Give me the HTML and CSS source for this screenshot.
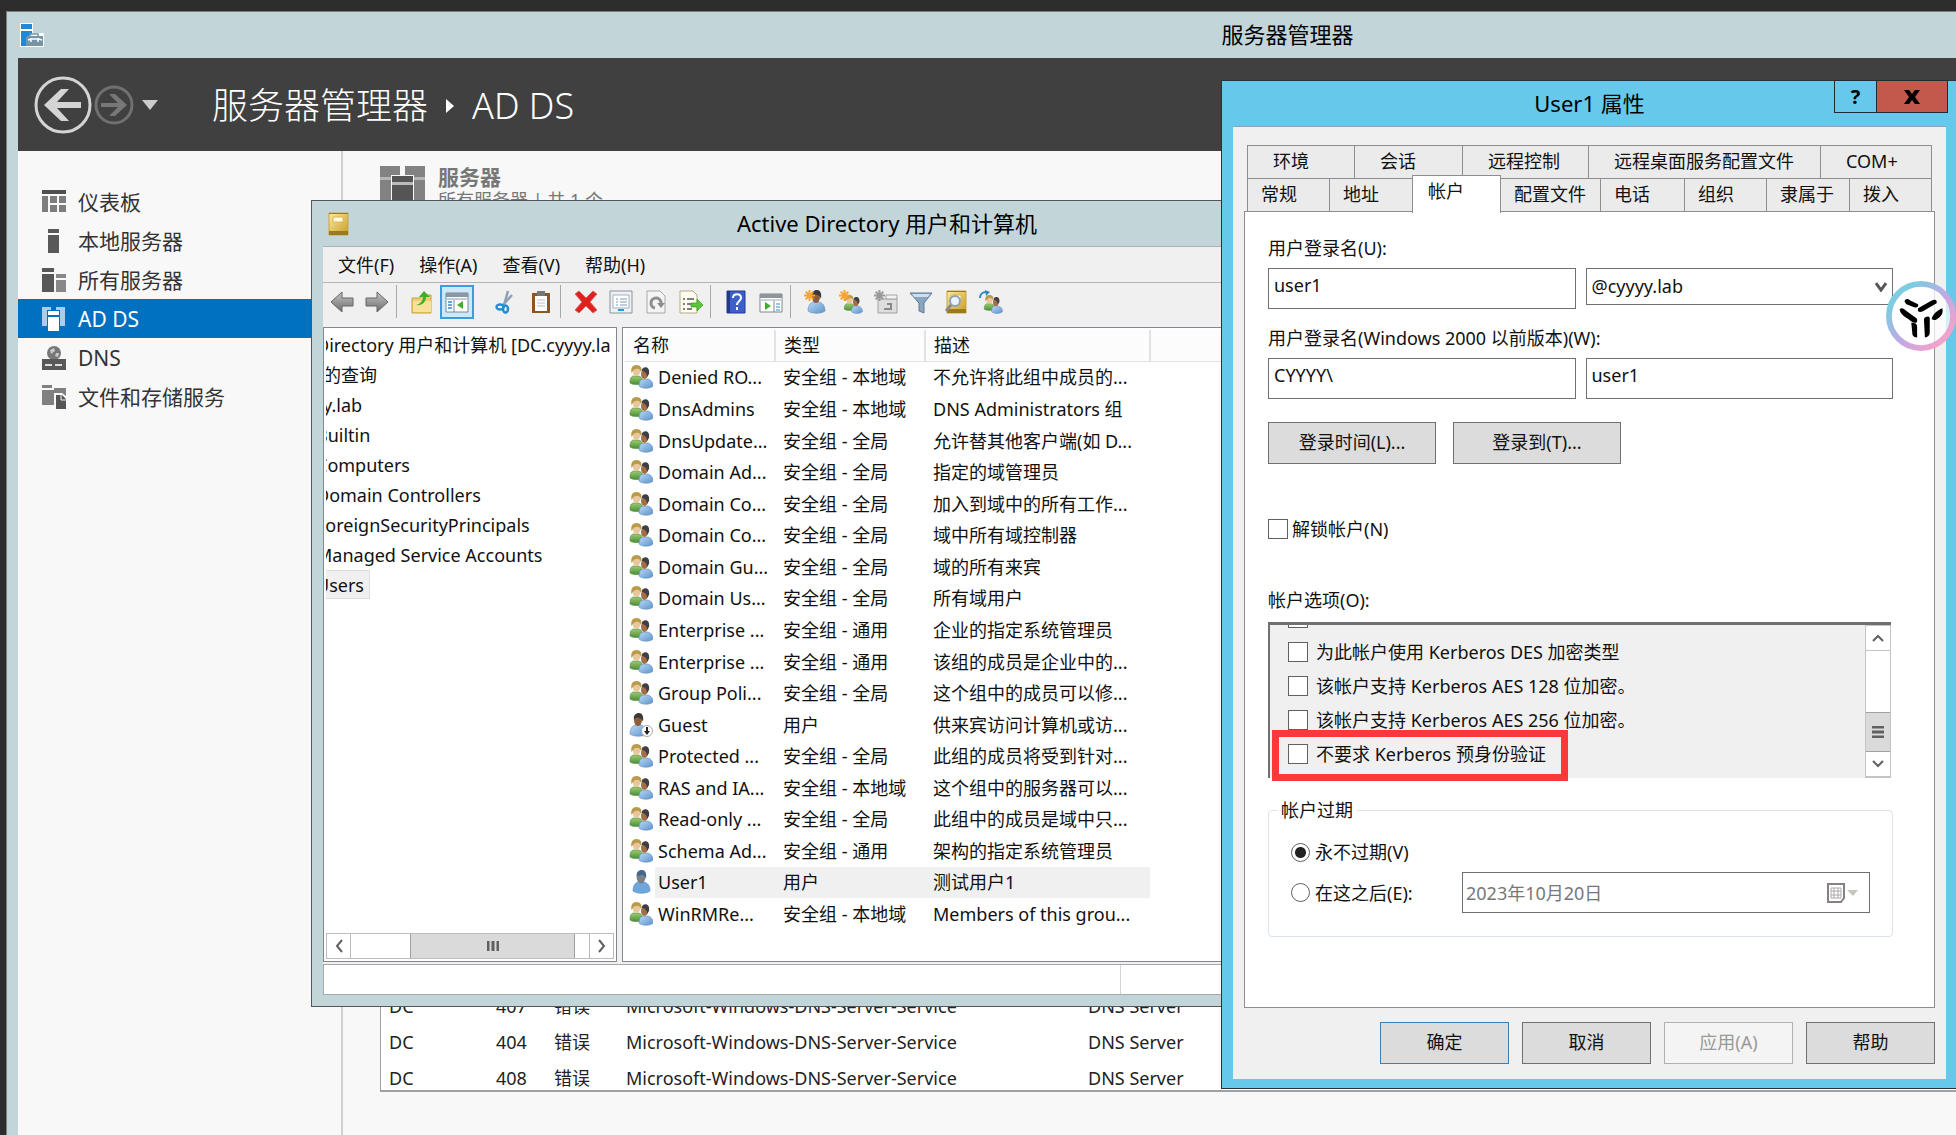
FILE: index.html
```html
<!DOCTYPE html>
<html lang="zh-CN">
<head>
<meta charset="utf-8">
<title>服务器管理器</title>
<link rel="stylesheet" href="styles.css">
</head>
<body>
<svg class="defs" aria-hidden="true">
  <defs>
    <linearGradient id="gGreen" x1="0" y1="0" x2="0" y2="1"><stop offset="0" stop-color="#9ccb74"/><stop offset="1" stop-color="#4d8f35"/></linearGradient>
    <linearGradient id="gBlue" x1="0" y1="0" x2="1" y2="1"><stop offset="0" stop-color="#b9d8f4"/><stop offset="1" stop-color="#5b93cd"/></linearGradient>
    <linearGradient id="gGold" x1="0" y1="0" x2="1" y2="1"><stop offset="0" stop-color="#fbeaa0"/><stop offset="1" stop-color="#c79c28"/></linearGradient>
    <linearGradient id="gGrey" x1="0" y1="0" x2="0" y2="1"><stop offset="0" stop-color="#c4c4c4"/><stop offset="1" stop-color="#6d6d6d"/></linearGradient>
    <linearGradient id="gRing" x1="0" y1="0" x2="1" y2="1"><stop offset="0.2" stop-color="#7fcbe0"/><stop offset="0.55" stop-color="#c3a8e4"/><stop offset="0.85" stop-color="#f3a2cb"/></linearGradient>
    <symbol id="group" viewBox="0 0 24 24">
      <path d="M1 18c0-5 1-6 3-7h6c3 1 4 4 4 7-3 2-10 2-13 0z" fill="url(#gGreen)" stroke="#4e8a3a" stroke-width=".6"/>
      <ellipse cx="7.500" cy="6" rx="3.800" ry="5" fill="#e8c79c"/>
      <path d="M2.500 8c-1-5 1-8 5-8s6 3 4.500 7c-1-3-3-4-5-3-2 0-3 2-4.500 4z" fill="#b99a4a"/>
      <path d="M10 21c0-4 1-6 4-7h5c3 1 5 3 5 7-3 3-11 3-14 0z" fill="url(#gBlue)" stroke="#5e8cc0" stroke-width=".6"/>
      <ellipse cx="15.500" cy="9" rx="3.500" ry="5" fill="#a56f45"/>
      <path d="M14 3c4-2 7 1 6 6l-2 3c0-4-2-5-4-6-2 0-1-2 0-3z" fill="#3f3f45"/>
    </symbol>
    <symbol id="user" viewBox="0 0 24 24">
      <path d="M4 21c0-5 2-8 5-9h6c4 1 6 4 6 9-4 3-13 3-17 0z" fill="url(#gBlue)" stroke="#5e8cc0" stroke-width=".6"/>
      <ellipse cx="12" cy="7" rx="4" ry="6" fill="#8f5c38"/>
      <path d="M8 7c-1-5 2-7 5-7s5 3 4 9c-1-3-2-4-4-4-2-1-4 0-5 2z" fill="#38383d"/>
    </symbol>
    <symbol id="burst" viewBox="0 0 10 10">
      <path d="M5 0v10M0 5h10M1.500 1.500l7 7M8.500 1.500l-7 7" stroke="currentColor" stroke-width="1.800"/>
    </symbol>
    <symbol id="book" viewBox="0 0 24 24">
      <path d="M3 1h19v22H3z" fill="url(#gGold)" stroke="#c9a53a"/>
      <path d="M3 1h19v1H3zM3 19h19v4H3z" fill="#9b7a1c"/>
      <path d="M7 5h10v5H7z" fill="#fffbe6" stroke="#d8b84a"/>
    </symbol>
  </defs>
</svg>

<main class="manager">
  <header class="titlebar">
    <svg class="app-icon" viewBox="0 0 24 24"><path d="M0 0h13v10h11v14H0z" fill="#fff"/><path d="M1 1h11v5H1zM1 8h11v3l-5 3v9H1z" fill="#1e88dc"/><path d="M7 13h16v10H6V15z" fill="#7694a6"/><path d="M8 17l3-1h8l3 1M11 15v4M18 15v4" fill="none" stroke="#fff" stroke-width="1.500"/><path d="M10 13v-2h8v2" fill="none" stroke="#7694a6" stroke-width="1.500"/></svg>
    <h1 class="caption">服务器管理器</h1>
  </header>
  <nav class="ribbon" aria-label="导航">
    <button class="nav-btn" aria-label="后退"><svg width="58" height="58" viewBox="0 0 58 58"><circle cx="29" cy="29" r="27" fill="none" stroke="#d4d4d4" stroke-width="3"/><path d="M10 29l17-16h8L23 26h24v6H23l12 13h-8z" fill="#d4d4d4"/></svg></button>
    <button class="nav-btn" aria-label="前进"><svg width="40" height="40" viewBox="0 0 40 40"><circle cx="20" cy="20" r="18" fill="none" stroke="#707070" stroke-width="3"/><path d="M33 20L21 9h-6l9 9H7v4h17l-9 9h6z" fill="#777"/></svg></button>
    <button class="nav-btn nav-more" aria-label="历史记录"><svg width="16" height="10" viewBox="0 0 16 10"><path d="M0 0h16L8 10z" fill="#ccc"/></svg></button>
    <p class="crumbs"><span>服务器管理器</span><svg width="8" height="14" viewBox="0 0 8 14"><path d="M0 0l8 7-8 7z" fill="#fff"/></svg><span>AD DS</span></p>
  </nav>
  <div class="workspace">
    <nav class="sidebar" aria-label="服务器管理器">
      <a href="#"><svg class="side-icon" viewBox="0 0 24 24"><path d="M0 0h24v4H0z" fill="#4f4f4f"/><path d="M0 6h6v16H0zM8 6h7v7H8zM17 6h7v7h-7zM8 15h7v7H8zM17 15h7v7h-7z" fill="#7d7d7d"/></svg>仪表板</a>
      <a href="#"><svg class="side-icon" viewBox="0 0 24 24"><path d="M6 0h11v4H6zM6 6h11v18H6z" fill="#585858"/></svg>本地服务器</a>
      <a href="#"><svg class="side-icon" viewBox="0 0 24 24"><path d="M0 0h12v4H0zM0 6h12v18H0z" fill="#585858"/><path d="M14 6h10v4H14zM14 12h10v12H14z" fill="#888"/></svg>所有服务器</a>
      <a href="#" class="current"><svg class="side-icon" viewBox="0 0 24 24"><path d="M0 0h9v3H5v16H0zM14 0h9v19h-5V3h-4z" fill="#a9cdea"/><path d="M6 4h11v4H6zM6 10h11v14H6z" fill="#fff"/></svg>AD DS</a>
      <a href="#"><svg class="side-icon" viewBox="0 0 24 24"><circle cx="12" cy="7" r="7" fill="#777"/><path d="M8 4l4-2 1 3-4 3zM14 7l3 0-1 4-3-1z" fill="#c9c9c9"/><path d="M0 13h24v11H0z" fill="#585858"/><path d="M3 18h7v2H3zM13 18h7v2h-7z" fill="#ddd"/></svg>DNS</a>
      <a href="#"><svg class="side-icon" viewBox="0 0 24 24"><path d="M0 0h10v3H0zM0 5h12V3h12v8l-4-3h-8v12H0z" fill="#808080"/><path d="M14 10h6l4 4v10H14z" fill="#555"/><path d="M19 10v5h5" fill="none" stroke="#f8f8f8"/></svg>文件和存储服务</a>
    </nav>
    <section class="content">
      <header class="tile-head">
        <svg width="45" height="45" viewBox="0 0 45 45"><path d="M0 0h20v9h-9v36H0zM25 0h20v45H34V9h-9z" fill="#828282"/><path d="M0 11h11v3H0zM34 11h11v3H34z" fill="#b5b5b5"/><path d="M12 10h21v6H12zM12 19h21v26H12z" fill="#555"/><path d="M12 16h21v3H12z" fill="#bbb"/></svg>
        <div><h2>服务器</h2><p>所有服务器 | 共 1 个</p></div>
      </header>
      <div class="events">
        <table>
          <colgroup><col class="c-host"><col class="c-id"><col class="c-level"><col class="c-source"><col></colgroup>
          <tbody>
            <tr><td>DC</td><td>407</td><td>错误</td><td>Microsoft-Windows-DNS-Server-Service</td><td>DNS Server</td></tr>
            <tr><td>DC</td><td>404</td><td>错误</td><td>Microsoft-Windows-DNS-Server-Service</td><td>DNS Server</td></tr>
            <tr><td>DC</td><td>408</td><td>错误</td><td>Microsoft-Windows-DNS-Server-Service</td><td>DNS Server</td></tr>
          </tbody>
        </table>
      </div>
    </section>
  </div>
</main>

<section class="aduc" aria-label="Active Directory 用户和计算机">
  <header class="titlebar">
    <svg class="app-icon" viewBox="0 0 24 24"><use href="#book"/></svg>
    <h2 class="caption">Active Directory 用户和计算机</h2>
  </header>
  <div class="console">
    <nav class="menu" aria-label="菜单"><button>文件(F)</button><button>操作(A)</button><button>查看(V)</button><button>帮助(H)</button></nav>
    <div class="toolbar">
      <button aria-label="后退"><svg viewBox="0 0 24 24"><path d="M1 12L12 2v6h11v8H12v6z" fill="url(#gGrey)" stroke="#666"/></svg></button>
      <button aria-label="前进"><svg viewBox="0 0 24 24"><path d="M23 12L12 2v6H1v8h11v6z" fill="url(#gGrey)" stroke="#666"/></svg></button>
      <i class="sep"></i>
      <button aria-label="上一级"><svg viewBox="0 0 24 24"><path d="M2 8h8l2-3h9v18H2z" fill="#f0cf72" stroke="#c9a13b"/><path d="M3 11h18v11H3z" fill="#f9e19a"/><path d="M6 15c5-1 7-5 7-8H9l5-6 6 6h-4c0 5-4 9-10 8z" fill="#3fae2a"/></svg></button>
      <button class="on" aria-label="显示控制台树"><svg viewBox="0 0 24 24"><path d="M1 3h22v19H1z" fill="#fff" stroke="#7b8794"/><path d="M1 3h22v4H1z" fill="#8b97a5"/><path d="M1 8h22v2H1z" fill="#c4ccd5"/><path d="M3 12h4M3 15h4M3 18h4" stroke="#3b88c9" stroke-width="1.500"/><path d="M9 10v12" stroke="#7b8794"/><path d="M18 11v8l-6-4z" fill="#3fae2a"/></svg></button>
      <button class="apart" aria-label="剪切"><svg viewBox="0 0 24 24"><path d="M14 1l-4 14M18 5L8 16" stroke="#8fa0b3" stroke-width="2.500"/><ellipse cx="6" cy="17" rx="3.500" ry="2.500" fill="none" stroke="#1f8fd4" stroke-width="2.500"/><ellipse cx="11.500" cy="19" rx="2.500" ry="3.500" fill="none" stroke="#1f8fd4" stroke-width="2.500"/></svg></button>
      <button aria-label="复制"><svg viewBox="0 0 24 24"><path d="M3 3h18v20H3z" fill="#8b5524"/><path d="M6 6h12v15H6z" fill="#fff"/><path d="M8 1h8v5H8z" fill="#777"/><path d="M8 10h8M8 13h8M8 16h8" stroke="#b9bec4"/></svg></button>
      <i class="sep"></i>
      <button aria-label="删除"><svg viewBox="0 0 24 24"><path d="M1 4l4-3 7 7 7-7 4 3-7 8 7 8-4 3-7-7-7 7-4-3 7-8z" fill="#e0201f" stroke="#d86a66"/></svg></button>
      <button aria-label="属性"><svg viewBox="0 0 24 24"><path d="M1 1h22v22H1z" fill="#eef1f4" stroke="#8b929a"/><path d="M4 5h16v13H4z" fill="#fff" stroke="#9fb0c2"/><path d="M7 9h2M7 12h2M7 15h2M11 9h7M11 12h7M11 15h7" stroke="#7d9ab8"/><path d="M9 20h6" stroke="#1f9ddb" stroke-width="2"/></svg></button>
      <button aria-label="刷新"><svg viewBox="0 0 24 24"><path d="M3 1h13l5 5v17H3z" fill="#f4f4f4" stroke="#a7a7a7"/><path d="M11 18a5 5 0 1 1 6-5" fill="none" stroke="#8d8d8d" stroke-width="3"/><path d="M13 13h8l-4 5z" fill="#8d8d8d"/></svg></button>
      <button aria-label="导出列表"><svg viewBox="0 0 24 24"><path d="M1 1h13l4 4v18H1z" fill="#fffdf0" stroke="#b3ab86"/><path d="M4 9h2M8 9h7M4 14h2M8 14h5M4 19h2M8 19h5" stroke="#555" stroke-width="1.500"/><path d="M12 13h6V9l6 6-6 6v-4h-6z" fill="#5ec43a" stroke="#3a9a22" stroke-width=".7"/></svg></button>
      <i class="sep"></i>
      <button aria-label="帮助"><svg viewBox="0 0 24 24"><path d="M3 1h18v22H3z" fill="#3c5fc9" stroke="#22388f"/><path d="M3 1h3v22H3z" fill="#22388f"/><path d="M9 8c0-5 8-5 8 0 0 3-4 3-4 7" fill="none" stroke="#fff" stroke-width="2"/><path d="M12 17h2v3h-2z" fill="#fff"/></svg></button>
      <button aria-label="操作窗格"><svg viewBox="0 0 24 24"><path d="M1 4h22v18H1z" fill="#fff" stroke="#7f868e"/><path d="M1 4h22v4H1z" fill="#8e959d"/><path d="M1 9h22v2H1z" fill="#cfd3d8"/><path d="M6 12v8l6-4z" fill="#3fae2a"/><path d="M15 11v11" stroke="#7f868e"/><path d="M17 14h4M17 17h4M17 20h4" stroke="#3b88c9"/></svg></button>
      <i class="sep"></i>
      <button aria-label="新建用户"><svg viewBox="0 0 24 24"><use href="#user"/><use href="#burst" width="11" height="11" color="#f7a52b"/></svg></button>
      <button aria-label="新建组"><svg viewBox="0 0 24 24"><use href="#group" x="4" y="5" width="20" height="19"/><use href="#burst" width="11" height="11" color="#f7a52b"/></svg></button>
      <button aria-label="新建组织单位"><svg viewBox="0 0 24 24"><path d="M4 9h19v14H4z" fill="#dedede" stroke="#a3a3a3"/><path d="M12 5h11v4H12z" fill="#f3f3f3" stroke="#a3a3a3"/><path d="M10 19h7v-5h-4" fill="none" stroke="#888" stroke-width="2"/><use href="#burst" width="11" height="11" color="#999"/></svg></button>
      <button aria-label="筛选"><svg viewBox="0 0 24 24"><path d="M1 3h22l-8 10v10l-5-2v-8z" fill="#8aa5c0" stroke="#5f7c99"/><path d="M3 4h18l-2 3H5z" fill="#cfdeec"/></svg></button>
      <button aria-label="查找"><svg viewBox="0 0 24 24"><use href="#book"/><circle cx="11" cy="11" r="5" fill="#eaf3fa" stroke="#8fa2b4" stroke-width="2"/><path d="M7 15l-5 6" stroke="#8a8a8a" stroke-width="3"/></svg></button>
      <button aria-label="添加到组"><svg viewBox="0 0 24 24"><use href="#group" x="4" y="5" width="20" height="19"/><path d="M1 8c0-4 3-6 6-6" fill="none" stroke="#2f87c6" stroke-width="2"/><path d="M6 0l5 2-4 4z" fill="#2f87c6"/></svg></button>
    </div>
    <div class="panes">
      <div class="tree">
        <ul>
          <li>Directory 用户和计算机 [DC.cyyyy.la</li>
          <li class="deeper">的查询</li>
          <li class="deeper">y.lab</li>
          <li>Builtin</li>
          <li>Computers</li>
          <li>Domain Controllers</li>
          <li>ForeignSecurityPrincipals</li>
          <li>Managed Service Accounts</li>
          <li><span class="picked">Users</span></li>
        </ul>
        <div class="hscroll">
          <button aria-label="向左滚动"><svg width="8" height="14" viewBox="0 0 8 14"><path d="M7 1L2 7l5 6" fill="none" stroke="#606060" stroke-width="2"/></svg></button>
          <span class="thumb"><svg width="12" height="10" viewBox="0 0 12 10"><path d="M1 0v10M6 0v10M11 0v10" stroke="#606060" stroke-width="3"/></svg></span>
          <button aria-label="向右滚动"><svg width="8" height="14" viewBox="0 0 8 14"><path d="M1 1l5 6-5 6" fill="none" stroke="#606060" stroke-width="2"/></svg></button>
        </div>
      </div>
      <div class="list">
        <table>
          <colgroup><col class="c-icon"><col class="c-name"><col class="c-type"><col class="c-desc"><col></colgroup>
          <thead><tr><th colspan="2">名称</th><th>类型</th><th>描述</th><th></th></tr></thead>
          <tbody>
            <tr><td><svg><use href="#group"/></svg></td><td>Denied RO...</td><td>安全组 - 本地域</td><td>不允许将此组中成员的...</td></tr>
            <tr><td><svg><use href="#group"/></svg></td><td>DnsAdmins</td><td>安全组 - 本地域</td><td>DNS Administrators 组</td></tr>
            <tr><td><svg><use href="#group"/></svg></td><td>DnsUpdate...</td><td>安全组 - 全局</td><td>允许替其他客户端(如 D...</td></tr>
            <tr><td><svg><use href="#group"/></svg></td><td>Domain Ad...</td><td>安全组 - 全局</td><td>指定的域管理员</td></tr>
            <tr><td><svg><use href="#group"/></svg></td><td>Domain Co...</td><td>安全组 - 全局</td><td>加入到域中的所有工作...</td></tr>
            <tr><td><svg><use href="#group"/></svg></td><td>Domain Co...</td><td>安全组 - 全局</td><td>域中所有域控制器</td></tr>
            <tr><td><svg><use href="#group"/></svg></td><td>Domain Gu...</td><td>安全组 - 全局</td><td>域的所有来宾</td></tr>
            <tr><td><svg><use href="#group"/></svg></td><td>Domain Us...</td><td>安全组 - 全局</td><td>所有域用户</td></tr>
            <tr><td><svg><use href="#group"/></svg></td><td>Enterprise ...</td><td>安全组 - 通用</td><td>企业的指定系统管理员</td></tr>
            <tr><td><svg><use href="#group"/></svg></td><td>Enterprise ...</td><td>安全组 - 通用</td><td>该组的成员是企业中的...</td></tr>
            <tr><td><svg><use href="#group"/></svg></td><td>Group Poli...</td><td>安全组 - 全局</td><td>这个组中的成员可以修...</td></tr>
            <tr><td><svg viewBox="0 0 24 24"><use href="#user" x="-3"/><circle cx="18" cy="18" r="5.500" fill="#fff" stroke="#aaa"/><path d="M17 14h2v4h2l-3 4-3-4h2z" fill="#222"/></svg></td><td>Guest</td><td>用户</td><td>供来宾访问计算机或访...</td></tr>
            <tr><td><svg><use href="#group"/></svg></td><td>Protected ...</td><td>安全组 - 全局</td><td>此组的成员将受到针对...</td></tr>
            <tr><td><svg><use href="#group"/></svg></td><td>RAS and IA...</td><td>安全组 - 本地域</td><td>这个组中的服务器可以...</td></tr>
            <tr><td><svg><use href="#group"/></svg></td><td>Read-only ...</td><td>安全组 - 全局</td><td>此组中的成员是域中只...</td></tr>
            <tr><td><svg><use href="#group"/></svg></td><td>Schema Ad...</td><td>安全组 - 通用</td><td>架构的指定系统管理员</td></tr>
            <tr class="picked-row"><td><svg viewBox="0 0 24 24"><path d="M4 21c0-5 2-8 5-9h6c4 1 6 4 6 9-4 3-13 3-17 0z" fill="#6fa6dc" stroke="#4d86c2" stroke-width=".6"/><ellipse cx="12" cy="7" rx="4.500" ry="6.500" fill="#7b8188"/><path d="M8 6c-1-4 2-6 5-6s5 3 4 9c-1-3-2-4-4-4z" fill="#46658a"/></svg></td><td>User1</td><td>用户</td><td>测试用户1</td></tr>
            <tr><td><svg><use href="#group"/></svg></td><td>WinRMRe...</td><td>安全组 - 本地域</td><td>Members of this grou...</td></tr>
          </tbody>
        </table>
      </div>
    </div>
    <footer class="status"></footer>
  </div>
</section>

<section class="props" role="dialog" aria-label="User1 属性">
  <header class="titlebar">
    <h2 class="caption">User1 属性</h2>
    <div class="win-btns"><button aria-label="帮助">?</button><button class="close" aria-label="关闭"><svg width="16" height="14" viewBox="0 0 16 14"><path d="M0 0h5l3 4 3-4h5l-5 7 5 7h-5l-3-4-3 4H0l5-7z" fill="#000"/></svg></button></div>
  </header>
  <form class="sheet">
    <div class="tabs tabs-back" role="tablist"><button type="button">环境</button><button type="button">会话</button><button type="button">远程控制</button><button type="button">远程桌面服务配置文件</button><button type="button">COM+</button></div>
    <div class="tabs tabs-front" role="tablist"><button type="button">常规</button><button type="button">地址</button><button type="button" class="active">帐户</button><button type="button">配置文件</button><button type="button">电话</button><button type="button">组织</button><button type="button">隶属于</button><button type="button">拨入</button></div>
    <div class="page">
      <label class="line" for="upn">用户登录名(U):</label>
      <div class="pair">
        <input class="field" id="upn" value="user1">
        <div class="combo"><select aria-label="域后缀"><option>@cyyyy.lab</option></select><svg width="12" height="10" viewBox="0 0 12 10"><path d="M1 1l5 7 5-7" fill="none" stroke="#555" stroke-width="3"/></svg></div>
      </div>
      <label class="line second" for="sam">用户登录名(Windows 2000 以前版本)(W):</label>
      <div class="pair">
        <input class="field" id="dom" aria-label="域" value="CYYYY\">
        <input class="field" id="sam" value="user1">
      </div>
      <div class="logon"><button type="button" class="btn">登录时间(L)...</button><button type="button" class="btn">登录到(T)...</button></div>
      <label class="check unlock"><input type="checkbox">解锁帐户(N)</label>
      <p class="line options-title">帐户选项(O):</p>
      <div class="options">
        <div class="options-view">
          <div class="options-list">
            <label class="check"><input type="checkbox" aria-label="帐户选项"></label>
            <label class="check"><input type="checkbox">为此帐户使用 Kerberos DES 加密类型</label>
            <label class="check"><input type="checkbox">该帐户支持 Kerberos AES 128 位加密。</label>
            <label class="check"><input type="checkbox">该帐户支持 Kerberos AES 256 位加密。</label>
            <label class="check"><input type="checkbox">不要求 Kerberos 预身份验证</label>
          </div>
          <div class="vscroll">
            <button type="button" aria-label="向上滚动"><svg width="12" height="8" viewBox="0 0 12 8"><path d="M1 7l5-5 5 5" fill="none" stroke="#606060" stroke-width="2"/></svg></button>
            <span class="thumb"><svg width="12" height="12" viewBox="0 0 12 12"><path d="M0 1h12M0 6h12M0 11h12" stroke="#606060" stroke-width="3"/></svg></span>
            <button type="button" aria-label="向下滚动"><svg width="12" height="8" viewBox="0 0 12 8"><path d="M1 1l5 5 5-5" fill="none" stroke="#606060" stroke-width="2"/></svg></button>
          </div>
        </div>
        <div class="marker"></div>
      </div>
      <fieldset class="expiry">
        <legend>帐户过期</legend>
        <label class="radio"><input type="radio" name="expiry" checked>永不过期(V)</label>
        <div class="after">
          <label class="radio"><input type="radio" name="expiry">在这之后(E):</label>
          <div class="date"><input aria-label="过期日期" value="2023年10月20日" disabled><svg width="32" height="20" viewBox="0 0 32 20"><path d="M1 1h16v14l-3 4H1z" fill="#fff" stroke="#8a8080" stroke-width="2"/><path d="M4 5h10v10H4zM4 8h10M4 12h10M7 5v10M11 5v10" fill="none" stroke="#aaa"/><path d="M20 7h11l-5 6z" fill="#c4c8bc"/></svg></div>
        </div>
      </fieldset>
    </div>
    <div class="actions"><button type="button" class="btn default">确定</button><button type="button" class="btn">取消</button><button type="button" class="btn" disabled>应用(A)</button><button type="button" class="btn">帮助</button></div>
  </form>
</section>

<button class="float-badge" aria-label="悬浮助手"><svg width="70" height="70" viewBox="0 0 72 72"><circle cx="36" cy="36" r="33" fill="#fff" fill-opacity=".72" stroke="url(#gRing)" stroke-width="6"/><g fill="#000"><path d="M19 21c1-3 3-3 6-1l8 4c1 3-2 4-4 3l-8-3zM33 28l14-8c4-2 6 0 5 3l-14 8c-4 2-6 0-5-3z"/><path d="M14 29c2-2 4-1 6 1l11 8c2 2 1 4 0 5-3 0-5-1-8-4-5-3-8-5-9-10zM58 28c1 5-1 8-4 10-2 2-5 3-7 1 1-5 6-9 11-11z"/><path d="M26 43c4 0 6 1 6 4v11c-4 0-5-2-5-5zM39 39c2-3 5-3 6-1v15c0 3-2 5-5 5z"/></g></svg></button>
</body>
</html>
```
FILE: styles.css
```css
* { box-sizing: border-box; }

body {
  margin: 0;
  height: 100vh;
  position: relative;
  overflow: hidden;
  background: #2d2d2d;
  color: #111;
  font: 18px/24px "Noto Sans", "Noto Sans CJK SC", sans-serif;
}

h1, h2, p, ul { margin: 0; padding: 0; font-weight: 400; }
button, input, select { font: inherit; color: inherit; margin: 0; }
button { padding: 0; border: 0; background: none; }
svg { display: block; flex: none; }
table { border-collapse: collapse; table-layout: fixed; }
.defs { position: absolute; width: 0; height: 0; }

.titlebar { display: flex; align-items: center; height: 46px; }
.caption { flex: 1; text-align: center; font-size: 22px; line-height: 28px; padding-bottom: 2px; color: #000; }
.app-icon { width: 24px; height: 24px; }

/* Server manager */
.manager {
  position: absolute;
  top: 11px;
  bottom: 0;
  left: 6px;
  right: 0;
  display: flex;
  flex-direction: column;
  padding-left: 11px;
  border: solid #777c7e;
  border-width: 1px 0 0 1px;
  background: #c2d6da;
}
.manager .app-icon { margin: 0 -26px 0 2px; }
.manager .caption { padding-left: 31%; }
.ribbon { display: flex; align-items: center; height: 93px; padding-left: 16px; background: #404040; color: #fff; }
.nav-more { margin-left: 8px; }
.nav-btn + .nav-btn:not(.nav-more) { margin-left: 2px; }
.crumbs { display: flex; align-items: center; gap: 18px; margin-left: 54px; padding-top: 2px; font-size: 36px; line-height: 48px; font-weight: 300; }
.workspace { flex: 1; display: flex; background: #f8f8f8; }
.sidebar { width: 325px; padding-top: 31px; border-right: 2px solid #d0d0d0; }
.sidebar a { display: flex; align-items: center; gap: 12px; height: 39px; padding-left: 24px; font-size: 21px; color: #333; text-decoration: none; }
.sidebar .current { background: #0070c0; color: #fff; }
.side-icon { width: 24px; height: 24px; }
.content { flex: 1; display: flex; flex-direction: column; padding: 15px 0 43px 37px; }
.tile-head { display: flex; gap: 13px; color: #777; }
.tile-head h2 { font-size: 21px; line-height: 22px; font-weight: 700; }
.events { margin-top: auto; height: 104px; overflow: hidden; border: solid #a0a0a0; border-width: 0 0 2px 1px; background: #fff; }
.events table { width: 100%; }
.events td { height: 36px; padding: 0 0 0 8px; white-space: nowrap; color: #222; }
.c-host { width: 107px; }
.c-id { width: 58px; }
.c-level { width: 72px; }
.c-source { width: 462px; }

/* Active Directory console */
.aduc {
  position: absolute;
  top: 200px;
  left: 311px;
  width: 1152px;
  padding: 0 11px 11px;
  border: 1px solid #51575c;
  background: #c2d6da;
}
.aduc .titlebar { height: 45px; }
.aduc .app-icon { margin: 0 -27px 0 3px; }
.console { background: #f0f0f0; border-top: 1px solid #aab0bc; }
.menu { display: flex; gap: 25px; height: 36px; padding-left: 15px; border-bottom: 1px solid #b4b4b8; }
.toolbar { display: flex; align-items: flex-start; gap: 1px; height: 44px; padding: 2px 0 0 2px; }
.toolbar button { width: 34px; height: 34px; display: grid; place-items: center; }
.toolbar svg { width: 24px; height: 24px; }
.toolbar .on { background: #cde8f9; border: 2px solid #3a9fd8; }
.toolbar .apart { margin-left: 14px; }
.sep { width: 1px; height: 33px; margin: 0 7px 0 1px; background: #a8a8a8; }
.panes { display: flex; gap: 5px; height: 635px; }
.tree { width: 294px; display: flex; flex-direction: column; justify-content: space-between; padding: 2px; border: 1px solid #828790; background: #fff; overflow: hidden; }
.tree ul { list-style: none; overflow: hidden; }
.tree li { height: 30px; line-height: 30px; margin-left: -10px; white-space: nowrap; }
.tree .deeper { margin-left: -3px; }
.picked { display: inline-block; height: 29px; line-height: 28px; padding-right: 5px; background: #f0f0f0; border: solid #dcdcdc; border-width: 1px 1px 1px 0; }
.hscroll { display: flex; height: 26px; border: 1px solid #bcbcbc; }
.hscroll button { width: 24px; display: grid; place-items: center; border-right: 1px solid #bcbcbc; }
.hscroll button:last-child { border-right: 0; border-left: 1px solid #bcbcbc; }
.hscroll .thumb { flex: 1; display: grid; place-items: center; margin: 0 14px 0 59px; background: #dadada; border: solid #a0a0a0; border-width: 0 1px; }
.list { flex: 1; padding: 2px; border: 1px solid #828790; background: #fff; overflow: hidden; }
.list table { width: 100%; height: 600px; }
.c-icon { width: 30px; }
.c-name { width: 120px; }
.c-type { width: 150px; }
.c-desc { width: 225px; }
.list th { height: 31px; padding: 0 0 0 8px; text-align: left; font-weight: 400; background: #fcfcfc; border: solid #e2e2e2; border-width: 0 2px 1px 0; }
.list td { padding: 0 0 0 8px; white-space: nowrap; line-height: 24px; }
.list td:first-child { padding: 0 0 0 4px; }
.list td:nth-child(2) { padding-left: 3px; }
.list td svg { width: 24px; height: 24px; }
.picked-row td:not(:first-child) { background: #f0f0f0; }
.status { height: 31px; margin-top: 2px; padding-left: 796px; background: #fff; border: 1px solid #a8a8a8; display: flex; }
.status::before { content: ""; width: 1px; background: #d4d4d4; }

/* User properties */
.props {
  position: absolute;
  top: 80px;
  right: 0;
  width: 735px;
  padding: 0 10px 9px 11px;
  border: solid #26343a;
  border-width: 1px 0 1px 1px;
  background: #66c8ea;
}
.props .titlebar { height: 45px; }
.win-btns { display: flex; align-self: flex-start; margin: -1px -2px 0 -112px; border: 1px solid #1d2d33; }
.win-btns button { width: 41px; height: 31px; font-weight: 700; font-size: 20px; color: #000; }
.win-btns .close { width: 71px; display: grid; place-items: center; background: #c3584c; border-left: 1px solid #1d2d33; }
.sheet { padding: 18px 11px 15px; background: #f0f0f0; border-top: 1px solid #8fa4b0; }
.tabs { display: grid; margin: 0 3px; height: 33px; }
.tabs button { text-align: left; padding: 0 0 2px 13px; background: #ebebeb; border: solid #8c8e94; border-width: 1px 1px 0 1px; white-space: nowrap; }
.tabs button + button { margin-left: -1px; }
.tabs-back { grid-template-columns: 108fr 108fr 126fr 232fr 111fr; }
.tabs-back button { padding-left: 25px; }
.tabs-front { grid-template-columns: 83fr 83fr 88fr 100fr 84fr 82fr 83fr 82fr; }
.tabs .active { margin: -3px 0 -2px -1px; padding: 0 0 7px 15px; background: #fff; z-index: 1; }
.page { padding: 24px 41px 70px 23px; background: #fff; border: 1px solid #8c8e94; }
.line { display: block; margin-bottom: 8px; }
.second { margin-top: 17px; }
.pair { display: grid; grid-template-columns: 1fr 1fr; gap: 10px; align-items: start; }
.field { width: 100%; height: 41px; padding: 0 5px 8px; background: #fff; border: 1px solid #707070; }
.combo { display: flex; align-items: center; height: 37px; border: 1px solid #707070; background: #fff; padding-right: 5px; }
.combo select { flex: 1; appearance: none; border: 0; background: none; padding: 0 5px 2px; height: 35px; }
.logon { display: flex; gap: 17px; margin-top: 23px; }
.btn { width: 168px; height: 42px; padding-bottom: 2px; background: #dcdcdc; border: 1px solid #707070; }
.check, .radio { display: flex; align-items: center; }
.check { gap: 4px; }
.unlock { margin-top: 53px; }
.check input { appearance: none; width: 20px; height: 20px; background: #fff; border: 1px solid #606060; }
.options-title { margin: 47px 0 10px; }
.options { position: relative; margin-right: 2px; }
.options-view { display: flex; justify-content: space-between; height: 156px; overflow: hidden; background: #f0f0f0; border: solid #707070; border-width: 3px 0 0 2px; }
.options-list { padding-left: 18px; margin-top: -24px; }
.options-list .check { height: 34px; gap: 8px; }
.vscroll { width: 26px; display: flex; flex-direction: column; background: #fff; border: 1px solid #c4c4c4; }
.vscroll button { height: 25px; display: grid; place-items: center; border-bottom: 1px solid #c4c4c4; }
.vscroll .thumb { height: 40px; margin-top: auto; display: grid; place-items: center; background: #dadada; border: solid #a0a0a0; border-width: 1px 0; }
.marker { position: absolute; left: 4px; top: 108px; width: 296px; height: 51px; border: 7px solid #fc3838; }
.expiry { margin: 20px 0 0; padding: 18px 22px 23px; border: 1px solid #dce4ea; border-radius: 4px; }
.expiry legend { margin-left: -14px; padding: 0 4px; }
.radio { gap: 5px; }
.radio input { appearance: none; width: 19px; height: 19px; border: 1px solid #606060; border-radius: 50%; background: #fff; }
.radio input:checked { background: radial-gradient(circle, #222 5px, #fff 6px); }
.after { display: grid; grid-template-columns: 171px 1fr; align-items: center; margin-top: 8px; }
.date { display: flex; align-items: center; height: 41px; padding-right: 10px; border: 1px solid #707070; }
.date input { flex: 1; width: 100%; border: 0; background: none; padding: 0 3px; color: #777; }
.actions { display: flex; justify-content: flex-end; gap: 13px; margin-top: 14px; }
.actions .btn { width: 129px; }
.actions .default { border-color: #3c7fb1; }
.actions .btn:disabled { background: #f4f4f4; border-color: #adb2b5; color: #999; }

.float-badge { position: absolute; right: 0; top: 281px; }
```
